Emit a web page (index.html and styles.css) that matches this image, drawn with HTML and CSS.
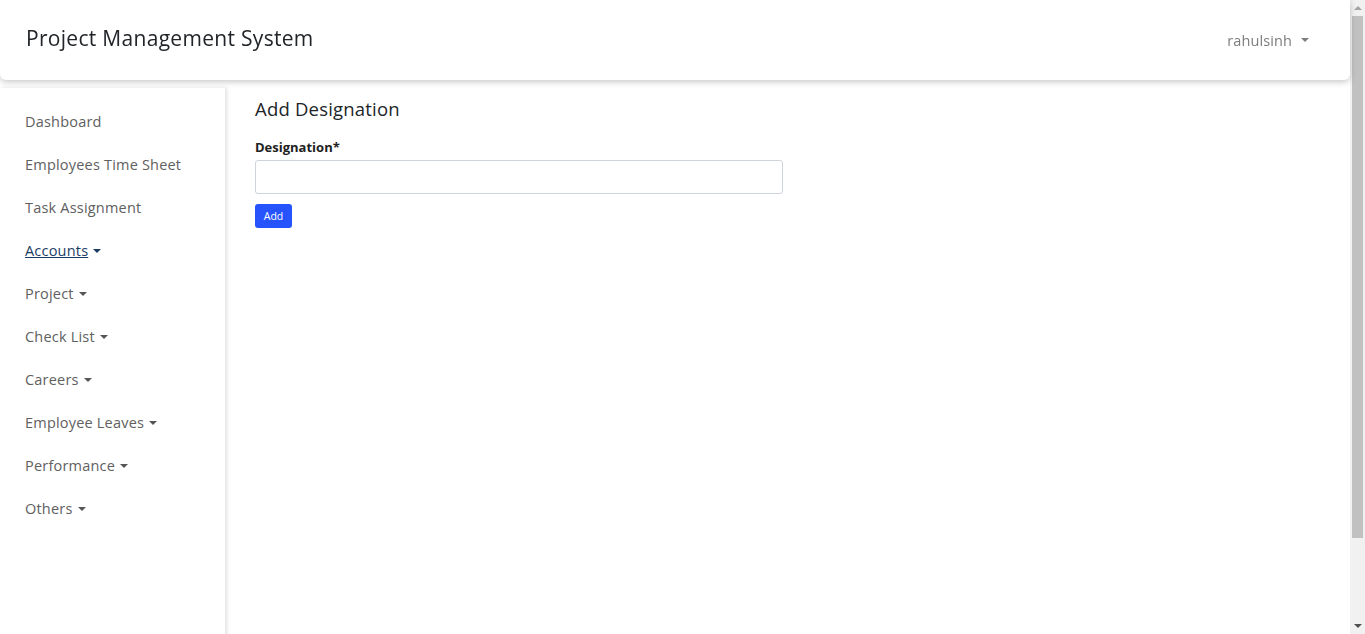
FILE: index.html
```html
<!DOCTYPE html>
<html lang="en">
<head>
<meta charset="utf-8">
<title>Project Management System</title>
<link rel="stylesheet" href="styles.css">
</head>
<body>
<div class="page">
  <header class="topbar">
    <div class="brand">Project Management System</div>
    <div class="user">rahulsinh <span class="caret"></span></div>
  </header>
  <div class="layout">
    <nav class="sidebar">
      <a class="nav-link" href="#">Dashboard</a>
      <a class="nav-link" href="#">Employees Time Sheet</a>
      <a class="nav-link" href="#">Task Assignment</a>
      <a class="nav-link active" href="#">Accounts<span class="caret"></span></a>
      <a class="nav-link" href="#">Project<span class="caret"></span></a>
      <a class="nav-link" href="#">Check List<span class="caret"></span></a>
      <a class="nav-link" href="#">Careers<span class="caret"></span></a>
      <a class="nav-link" href="#">Employee Leaves<span class="caret"></span></a>
      <a class="nav-link" href="#">Performance<span class="caret"></span></a>
      <a class="nav-link" href="#">Others<span class="caret"></span></a>
    </nav>
    <main class="content">
      <h2 class="page-title">Add Designation</h2>
      <form class="form">
        <label class="label" for="designation">Designation*</label>
        <input class="input" id="designation" type="text">
        <button class="btn" type="button">Add</button>
      </form>
    </main>
  </div>
</div>
<div class="scrollbar" aria-hidden="true">
  <span class="arrow up"></span>
  <span class="thumb"></span>
  <span class="arrow down"></span>
</div>
</body>
</html>
```
FILE: styles.css
```css
* { box-sizing: border-box; }
html, body { margin: 0; padding: 0; }
body {
  font-family: "Open Sans", "Noto Sans", sans-serif;
  background: #fff;
  color: #212529;
}
.page {
  width: 1350px;
  min-height: 731px;
}
.topbar {
  height: 80px;
  display: flex;
  align-items: center;
  justify-content: space-between;
  padding: 0 41px 0 26px;
  background: #fff;
  border-bottom-right-radius: 6px;
  border-bottom-left-radius: 6px;
  box-shadow: 0 2px 6px rgba(0,0,0,0.22);
  position: relative;
  z-index: 2;
}
.brand {
  font-size: 21px;
  color: #212529;
  margin-top: -4px;
  letter-spacing: 0.3px;
}
.user {
  font-size: 14.5px;
  color: #7d7d7d;
  display: flex;
  align-items: center;
  letter-spacing: 0.1px;
}
.user .caret { margin-left: 9px; }
.caret {
  display: inline-block;
  width: 0; height: 0;
  border-left: 4px solid transparent;
  border-right: 4px solid transparent;
  border-top: 4px solid currentColor;
  margin-left: 5px;
  vertical-align: 3px;
}
.layout {
  display: flex;
  margin-top: 8px;
  min-height: 643px;
}
.sidebar {
  width: 225px;
  flex: none;
  padding-top: 20px;
  display: flex;
  flex-direction: column;
  box-shadow: 2px 0 4px rgba(0,0,0,0.12);
}
.nav-link {
  display: block;
  padding: 0 25px;
  height: 43px;
  line-height: 28px;
  font-size: 14.5px;
  color: #606060;
  text-decoration: none;
  letter-spacing: 0.2px;
}
.nav-link.active {
  color: #1c3d63;
  text-decoration: underline;
}
.nav-link .caret { color: #555; }
.nav-link.active .caret { color: #1c3d63; }
.content {
  flex: 1;
  padding: 8px 30px;
}
.page-title {
  font-size: 18.5px;
  font-weight: 400;
  margin: 0 0 16px;
  line-height: 26px;
  letter-spacing: 0.2px;
}
.form { display: flex; flex-direction: column; align-items: flex-start; }
.label {
  font-size: 13px;
  font-weight: 700;
  color: #222;
  margin-bottom: 3px;
  line-height: 19px;
}
.input {
  width: 528px;
  height: 34px;
  border: 1px solid #ced4da;
  border-radius: 3px;
  margin-bottom: 10px;
}
.btn {
  background: #2753fd;
  color: #fff;
  border: none;
  border-radius: 3px;
  font-family: inherit;
  font-size: 10.5px;
  width: 37px;
  height: 24px;
  padding: 0;
}
.scrollbar {
  position: fixed;
  top: 0;
  right: 0;
  width: 15px;
  height: 100vh;
  background: #f1f1f1;
  display: flex;
  flex-direction: column;
  align-items: center;
}
.arrow {
  width: 0; height: 0;
  border-left: 4px solid transparent;
  border-right: 4px solid transparent;
  flex: none;
}
.arrow.up { border-bottom: 4px solid #a3a3a3; margin: 6px 0 6px; }
.arrow.down { border-top: 4px solid #505050; margin: auto 0 6px; }
.thumb {
  width: 11px;
  height: 522px;
  background: #c1c1c1;
  flex: none;
}
```
